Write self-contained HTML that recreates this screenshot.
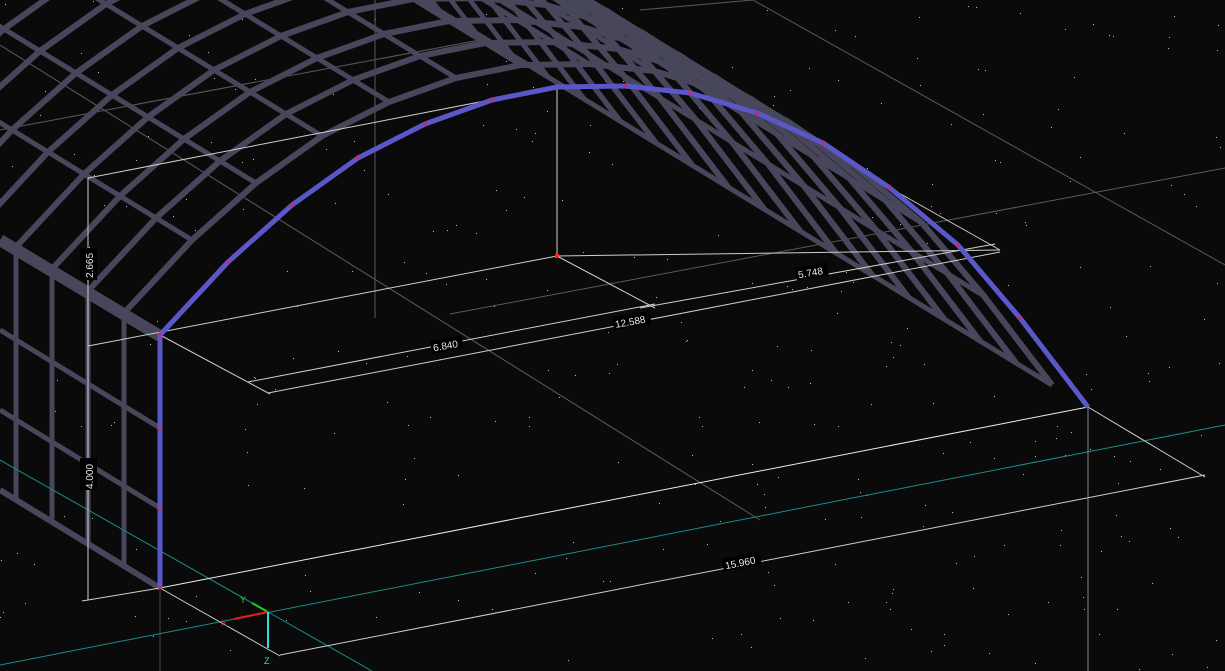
<!DOCTYPE html>
<html><head><meta charset="utf-8"><style>
html,body{margin:0;padding:0;background:#0a0a0a;overflow:hidden}
svg{display:block}
.t{font-family:"Liberation Sans",sans-serif;font-size:10px;fill:#e8e8e8}
</style></head><body>
<svg id="s" width="1225" height="671" viewBox="0 0 1225 671" xmlns="http://www.w3.org/2000/svg">
<rect width="1225" height="671" fill="#0a0a0a"/>
<g id="stars"></g>
<g stroke="#5a5a5a" stroke-width="1" fill="none">
<line x1="0" y1="45" x2="760" y2="520"/>
<line x1="753" y1="0" x2="1225" y2="265"/>
<line x1="640" y1="10" x2="753" y2="0"/>
<line x1="450" y1="314" x2="1225" y2="168"/>
<line x1="0" y1="130" x2="480" y2="40"/>
<line x1="375" y1="0" x2="375" y2="318"/>
<line x1="160" y1="588" x2="160" y2="671" stroke="#444"/>
</g>
<g id="grid" stroke="#47465a" stroke-width="6" fill="none" stroke-linejoin="round"></g>
<g stroke="#47465a" stroke-width="6" fill="none">
<line x1="0" y1="240" x2="160" y2="336" stroke-width="12"/>
</g>
<g id="wall" stroke="#47465a" stroke-width="5" fill="none"></g>
<g stroke="#1a8c8c" stroke-width="1">
<line x1="0" y1="460" x2="372" y2="671"/>
<line x1="0" y1="665" x2="1225" y2="425"/>
</g>
<g stroke="#cfcfcf" stroke-width="1" fill="none">
<line x1="88" y1="178" x2="557" y2="87"/>
<line x1="88" y1="346" x2="557" y2="256"/>
<line x1="557" y1="256" x2="1000" y2="250"/>
<line x1="557" y1="87" x2="557" y2="256"/>
<line x1="160" y1="335" x2="270" y2="394"/>
<line x1="557" y1="256" x2="655" y2="308"/>
<line x1="890" y1="188" x2="1000" y2="250"/>
<line x1="248" y1="382" x2="655" y2="304"/>
<line x1="268" y1="393" x2="1000" y2="252"/>
<line x1="640" y1="308" x2="995" y2="244"/>
<line x1="88" y1="178" x2="88" y2="600"/>
<line x1="82" y1="601" x2="160" y2="588"/>
<line x1="160" y1="588" x2="1088" y2="407" stroke="#eee"/>
<line x1="160" y1="588" x2="280" y2="656"/>
<line x1="1088" y1="407" x2="1205" y2="477"/>
<line x1="280" y1="655" x2="1205" y2="475"/>
<line x1="1088" y1="407" x2="1088" y2="671" stroke="#888"/>
</g>
<polyline fill="none" stroke="#5a58c8" stroke-width="5" stroke-linejoin="round" points="160,588 160,335 228,262 292,205 358,158 425,124 492,100 557,87 625,86 690,93 757,113 823,143 890,188 958,245 1020,318 1088,407"/>
<g fill="#c03070">
<circle cx="160" cy="428" r="2"/><circle cx="160" cy="508" r="2"/><circle cx="160" cy="587" r="2"/><circle cx="160" cy="335" r="2"/>
<circle cx="228" cy="262" r="2"/><circle cx="292" cy="205" r="2"/><circle cx="358" cy="158" r="2"/><circle cx="425" cy="124" r="2"/><circle cx="492" cy="100" r="2"/><circle cx="625" cy="86" r="2"/><circle cx="690" cy="93" r="2"/><circle cx="757" cy="113" r="2"/><circle cx="823" cy="143" r="2"/><circle cx="890" cy="188" r="2"/><circle cx="958" cy="245" r="2"/><circle cx="1020" cy="318" r="2"/>
</g>
<rect x="555" y="254" width="4" height="4" fill="#ff2020"/>
<g>
<rect x="80" y="248" width="17" height="32" fill="#000"/><text class="t" transform="translate(93,278) rotate(-90)">2.665</text>
<rect x="80" y="458" width="17" height="32" fill="#000"/><text class="t" transform="translate(93,489) rotate(-90)">4.000</text>
<g transform="translate(447,346) rotate(-10)"><rect x="-16" y="-8" width="32" height="13" fill="#000"/><text class="t" x="-14" y="3">6.840</text></g>
<g transform="translate(632,322) rotate(-10)"><rect x="-19" y="-8" width="38" height="13" fill="#000"/><text class="t" x="-17" y="3">12.588</text></g>
<g transform="translate(812,273) rotate(-10)"><rect x="-16" y="-8" width="32" height="13" fill="#000"/><text class="t" x="-14" y="3">5.748</text></g>
<g transform="translate(742,563) rotate(-11)"><rect x="-19" y="-8" width="38" height="13" fill="#000"/><text class="t" x="-17" y="3">15.960</text></g>
</g>
<g stroke-width="2">
<line x1="268" y1="612" x2="252" y2="603" stroke="#20d020"/>
<line x1="268" y1="612" x2="234" y2="619" stroke="#e02020"/>
<line x1="268" y1="612" x2="268" y2="648" stroke="#20e0e0"/>
</g>
<text x="240" y="603" font-family="Liberation Sans" font-size="9" fill="#20d020">Y</text>
<text x="221" y="626" font-family="Liberation Sans" font-size="9" fill="#e02020">X</text>
<text x="264" y="664" font-family="Liberation Sans" font-size="9" fill="#20e0e0">Z</text>
</svg>
<script>
var pts=[[160,335],[228,262],[292,205],[358,158],[425,124],[492,100],[557,87],[625,86],[690,93],[757,113],[823,143],[890,188],[958,245],[1020,318],[1088,407]];
var ns="http://www.w3.org/2000/svg",g=document.getElementById('grid'),dx=-36,dy=-22;
for(var k=1;k<=30;k++){var p=document.createElementNS(ns,'polyline');
p.setAttribute('points',pts.map(function(q){return (q[0]+dx*k)+','+(q[1]+dy*k)}).join(' '));
if(k>10)p.setAttribute('stroke-width',Math.max(3,6-(k-10)*0.2));g.appendChild(p);}
pts.forEach(function(q,i){if(i==0)return;var l=document.createElementNS(ns,'line');
l.setAttribute('x1',q[0]+dx);l.setAttribute('y1',q[1]+dy);l.setAttribute('x2',q[0]+dx*30);l.setAttribute('y2',q[1]+dy*30);l.setAttribute('stroke-width',5);g.appendChild(l);});
var w=document.getElementById('wall');
for(var k=1;k<=6;k++){var l=document.createElementNS(ns,'line');var x=160+dx*k,y=335+dy*k;
l.setAttribute('x1',x);l.setAttribute('y1',y);l.setAttribute('x2',x);l.setAttribute('y2',588+dy*k);w.appendChild(l);}
[428,508,588].forEach(function(y){var l=document.createElementNS(ns,'line');l.setAttribute('x1',160);l.setAttribute('y1',y);l.setAttribute('x2',0);l.setAttribute('y2',y-98);if(y==588)l.setAttribute('stroke-width',6);w.appendChild(l);});
var st=document.getElementById('stars'),s=7;function r(){s=(s*16807)%2147483647;return s/2147483647;}
for(var i=0;i<350;i++){var c=document.createElementNS(ns,'rect');c.setAttribute('x',Math.floor(r()*1225));c.setAttribute('y',Math.floor(r()*671));c.setAttribute('width',1);c.setAttribute('height',1);c.setAttribute('fill','#bbb');st.appendChild(c);}
</script>
</body></html>
